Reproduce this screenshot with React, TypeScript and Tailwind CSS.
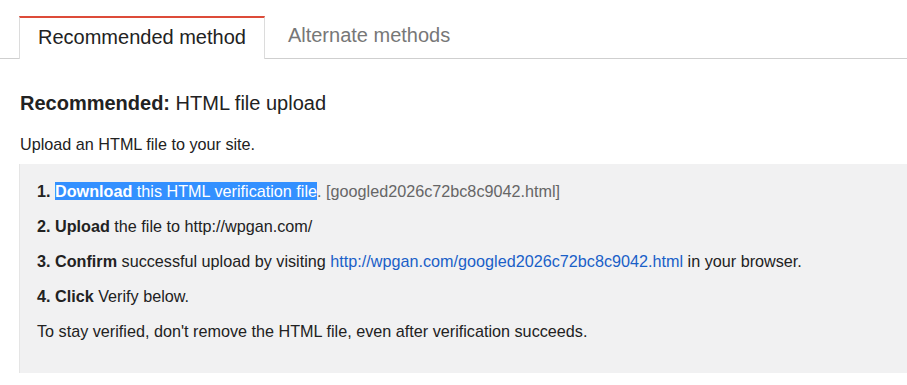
export default function App() {
  return (
    <div className="min-h-screen bg-white font-['Liberation_Sans',Arial,sans-serif] text-[#222]">
      <div className="flex items-end pt-[16px] border-b border-[#cfcfcf] h-[59px]">
        <div className="ml-[19px] h-[43px] -mb-px bg-white border-t-2 border-t-[#dd4b39] border-x border-x-[#dcdcdc] px-[18px] flex items-center pb-[4px] text-[20px] text-[#222]">
          Recommended method
        </div>
        <div className="h-[42px] px-[23px] flex items-center pb-[4px] text-[20px] text-[#777]">
          Alternate methods
        </div>
      </div>

      <div className="pl-[20px]">
        <h2 className="mt-[33px] text-[20px] leading-[22px]">
          <span className="font-bold">Recommended:</span> HTML file upload
        </h2>
        <p className="mt-[21px] text-[16.2px] leading-[18px]">Upload an HTML file to your site.</p>
      </div>

      <div className="ml-[19px] mt-[11px] bg-[#f1f1f2] border-l border-[#e5e5e5] h-[209px] pl-[17px] pt-[18px] text-[16.2px] leading-[18px]">
        <ol className="flex flex-col gap-[17px]">
          <li>
            <span className="font-bold">1. </span>
            <span className="bg-[#3390ff] text-white">
              <span className="font-bold">Download</span> this HTML verification file
            </span>
            <span className="text-[#666]">. [googled2026c72bc8c9042.html]</span>
          </li>
          <li>
            <span className="font-bold">2. Upload</span> the file to http://wpgan.com/
          </li>
          <li>
            <span className="font-bold">3. Confirm</span> successful upload by visiting{" "}
            <a className="text-[#1a5fc8]">http://wpgan.com/googled2026c72bc8c9042.html</a> in your browser.
          </li>
          <li>
            <span className="font-bold">4. Click</span> Verify below.
          </li>
          <li>To stay verified, don't remove the HTML file, even after verification succeeds.</li>
        </ol>
      </div>
    </div>
  );
}
